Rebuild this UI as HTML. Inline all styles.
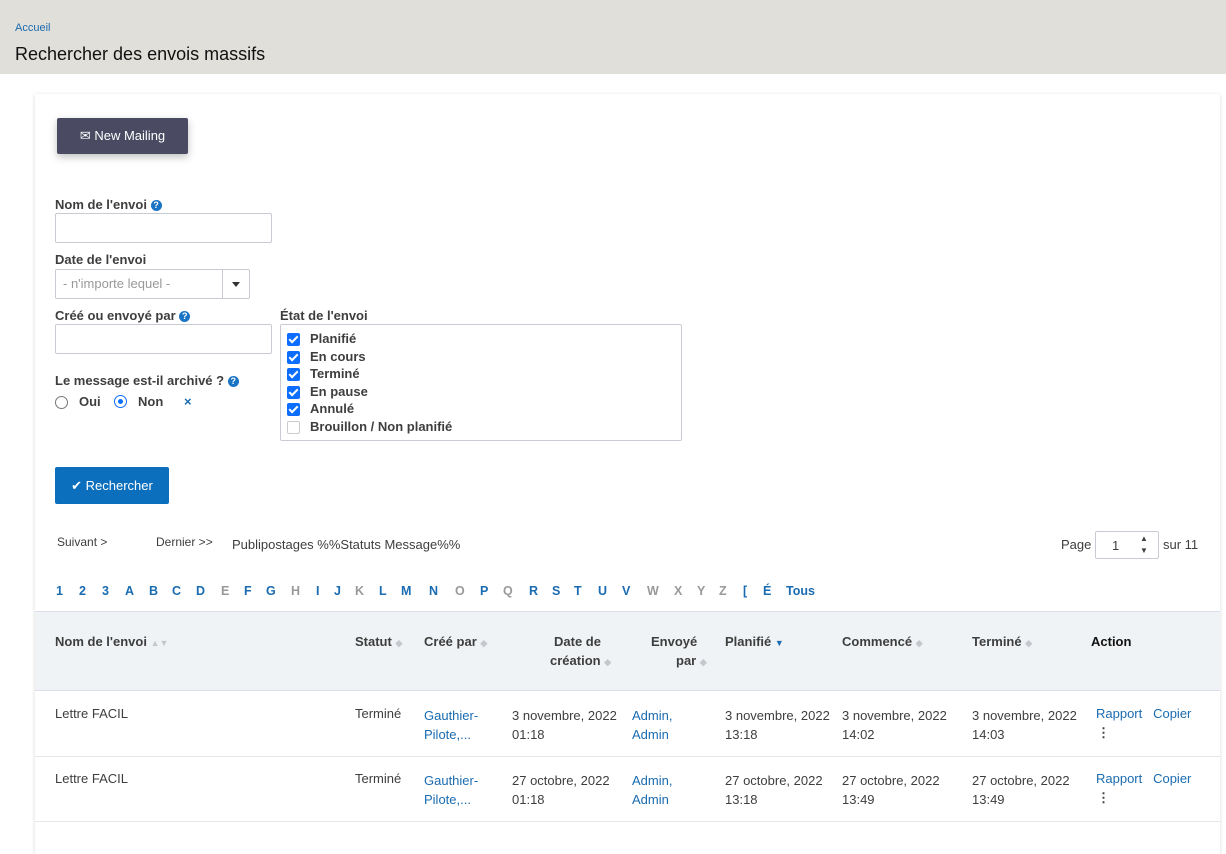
<!DOCTYPE html><html><head><meta charset="utf-8"><style>
body{margin:0;width:1226px;height:830px;overflow:hidden;background:#fff;font-family:"Liberation Sans",sans-serif;font-size:13px;color:#3e3e3e;position:relative}
.a{position:absolute;white-space:nowrap}
.hdr{position:absolute;left:0;top:0;width:1226px;height:74px;background:#e0dfd9}
.card{position:absolute;left:35px;top:94px;width:1185px;height:760px;background:#fff;box-shadow:0 1px 4px rgba(0,0,0,.15)}
.lbl{font-weight:bold;color:#3e3e3e}
.q{display:inline-block;width:11px;height:11px;border-radius:50%;background:#1a74c4;color:#fff;font-size:9px;text-align:center;line-height:11px;font-weight:bold;vertical-align:1px}
.inp{position:absolute;border:1px solid #c8ccd2;border-radius:2px;background:#fff;box-sizing:border-box}
.blue{color:#1a6bb0}
.cb{position:absolute;width:13px;height:13px;border-radius:2px;background:#0d6efd;left:287px}
.cb:after{content:"";position:absolute;left:4px;top:1px;width:3px;height:7px;border:solid #fff;border-width:0 2px 2px 0;transform:rotate(45deg)}
.th{font-weight:bold;color:#3e3e3e}
.s{color:#c4c8cc;font-size:9px}
.g{color:#999}
</style></head><body>
<div class="hdr"></div>
<div class="a blue" style="left:15px;top:22px;font-size:11px">Accueil</div>
<div class="a" style="left:15px;top:44px;font-size:18px;color:#111">Rechercher des envois massifs</div>
<div class="card"></div>
<div class="a" style="left:57px;top:118px;width:131px;height:36px;background:#4a4a63;border-radius:2px;box-shadow:0 3px 8px rgba(0,0,0,.25);color:#fff;line-height:36px;text-align:center">✉ New Mailing</div>
<div class="a lbl" style="left:55px;top:197px">Nom de l'envoi <span class="q">?</span></div>
<div class="inp" style="left:55px;top:213px;width:217px;height:30px"></div>
<div class="a lbl" style="left:55px;top:252px">Date de l'envoi</div>
<div class="inp" style="left:55px;top:269px;width:195px;height:30px"></div>
<div class="a" style="left:222px;top:270px;width:1px;height:28px;background:#c8ccd2"></div>
<div class="a" style="left:63px;top:276px;color:#999">- n'importe lequel -</div>
<div class="a" style="left:232px;top:282px;border:4px solid transparent;border-top:5px solid #333"></div>
<div class="a lbl" style="left:55px;top:308px">Créé ou envoyé par <span class="q">?</span></div>
<div class="inp" style="left:55px;top:324px;width:217px;height:30px"></div>
<div class="a lbl" style="left:55px;top:373px">Le message est-il archivé ? <span class="q">?</span></div>
<div class="a" style="left:55px;top:396px;width:11px;height:11px;border:1px solid #777;border-radius:50%"></div>
<div class="a" style="left:79px;top:394px;font-weight:bold">Oui</div>
<div class="a" style="left:114px;top:395px;width:11px;height:11px;border:1px solid #0d6efd;border-radius:50%"></div>
<div class="a" style="left:118px;top:399px;width:5px;height:5px;background:#0d6efd;border-radius:50%"></div>
<div class="a" style="left:138px;top:394px;font-weight:bold">Non</div>
<div class="a blue" style="left:184px;top:394px;font-weight:bold">×</div>
<div class="a lbl" style="left:280px;top:308px">État de l'envoi</div>
<div class="inp" style="left:280px;top:324px;width:402px;height:117px"></div>
<div class="cb" style="top:333px"></div><div class="a lbl" style="left:310px;top:331px">Planifié</div>
<div class="cb" style="top:351px"></div><div class="a lbl" style="left:310px;top:349px">En cours</div>
<div class="cb" style="top:368px"></div><div class="a lbl" style="left:310px;top:366px">Terminé</div>
<div class="cb" style="top:386px"></div><div class="a lbl" style="left:310px;top:384px">En pause</div>
<div class="cb" style="top:403px"></div><div class="a lbl" style="left:310px;top:401px">Annulé</div>
<div class="a" style="left:287px;top:421px;width:11px;height:11px;border:1px solid #ccc;border-radius:2px"></div><div class="a lbl" style="left:310px;top:419px">Brouillon / Non planifié</div>
<div class="a" style="left:55px;top:467px;width:114px;height:37px;background:#0c6fbe;border-radius:2px;color:#fff;line-height:37px;text-align:center">✔ Rechercher</div>
<div class="a" style="left:57px;top:535px;font-size:12px">Suivant &gt;</div>
<div class="a" style="left:156px;top:535px;font-size:12px">Dernier &gt;&gt;</div>
<div class="a" style="left:232px;top:537px">Publipostages %%Statuts Message%%</div>
<div class="a" style="left:1061px;top:537px">Page</div>
<div class="inp" style="left:1095px;top:531px;width:64px;height:28px"></div>
<div class="a" style="left:1112px;top:538px">1</div>
<div class="a" style="left:1140px;top:533px;font-size:8px;line-height:12px">▲<br>▼</div>
<div class="a" style="left:1163px;top:537px">sur 11</div>
<div class="a blue" style="top:584px;left:0;font-weight:bold;font-size:12.5px">
<span class="a" style="left:56px">1</span><span class="a" style="left:79px">2</span><span class="a" style="left:102px">3</span><span class="a" style="left:125px">A</span><span class="a" style="left:149px">B</span><span class="a" style="left:172px">C</span><span class="a" style="left:196px">D</span><span class="a g" style="left:221px">E</span><span class="a" style="left:244px">F</span><span class="a" style="left:266px">G</span><span class="a g" style="left:291px">H</span><span class="a" style="left:316px">I</span><span class="a" style="left:334px">J</span><span class="a g" style="left:355px">K</span><span class="a" style="left:379px">L</span><span class="a" style="left:401px">M</span><span class="a" style="left:429px">N</span><span class="a g" style="left:455px">O</span><span class="a" style="left:480px">P</span><span class="a g" style="left:503px">Q</span><span class="a" style="left:529px">R</span><span class="a" style="left:552px">S</span><span class="a" style="left:574px">T</span><span class="a" style="left:598px">U</span><span class="a" style="left:622px">V</span><span class="a g" style="left:647px">W</span><span class="a g" style="left:674px">X</span><span class="a g" style="left:697px">Y</span><span class="a g" style="left:719px">Z</span><span class="a" style="left:743px">[</span><span class="a" style="left:763px">É</span><span class="a" style="left:786px">Tous</span></div>
<div class="a" style="left:35px;top:611px;width:1185px;height:80px;background:#f0f3f5;border-top:1px solid #dde;border-bottom:1px solid #dde;box-sizing:border-box"></div>
<div class="a th" style="left:55px;top:634px">Nom de l'envoi <span class="s">&#9650;&#9660;</span></div>
<div class="a th" style="left:355px;top:634px">Statut <span class="s">◆</span></div>
<div class="a th" style="left:424px;top:634px">Créé par <span class="s">◆</span></div>
<div class="a th" style="left:554px;top:634px">Date de</div><div class="a th" style="left:550px;top:653px">création <span class="s">◆</span></div>
<div class="a th" style="left:651px;top:634px">Envoyé</div><div class="a th" style="left:676px;top:653px">par <span class="s">◆</span></div>
<div class="a th" style="left:725px;top:634px">Planifié <span style="color:#1a6bb0;font-size:9px">▼</span></div>
<div class="a th" style="left:842px;top:634px">Commencé <span class="s">◆</span></div>
<div class="a th" style="left:972px;top:634px">Terminé <span class="s">◆</span></div>
<div class="a th" style="left:1091px;top:634px;color:#111">Action</div>
<div class="a" style="left:35px;top:756px;width:1185px;height:1px;background:#e5e7ea"></div>
<div class="a" style="left:35px;top:821px;width:1185px;height:1px;background:#e5e7ea"></div>
<div class="a" style="left:55px;top:706px">Lettre FACIL</div>
<div class="a" style="left:355px;top:706px">Terminé</div>
<div class="a blue" style="left:424px;top:706px;line-height:19px">Gauthier-<br>Pilote,...</div>
<div class="a" style="left:512px;top:706px;line-height:19px">3 novembre, 2022<br>01:18</div>
<div class="a blue" style="left:632px;top:706px;line-height:19px">Admin,<br>Admin</div>
<div class="a" style="left:725px;top:706px;line-height:19px">3 novembre, 2022<br>13:18</div>
<div class="a" style="left:842px;top:706px;line-height:19px">3 novembre, 2022<br>14:02</div>
<div class="a" style="left:972px;top:706px;line-height:19px">3 novembre, 2022<br>14:03</div>
<div class="a blue" style="left:1096px;top:706px">Rapport&nbsp;&nbsp; Copier</div>
<div class="a" style="left:1097px;top:725px;font-weight:bold">⋮</div>
<div class="a" style="left:55px;top:771px">Lettre FACIL</div>
<div class="a" style="left:355px;top:771px">Terminé</div>
<div class="a blue" style="left:424px;top:771px;line-height:19px">Gauthier-<br>Pilote,...</div>
<div class="a" style="left:512px;top:771px;line-height:19px">27 octobre, 2022<br>01:18</div>
<div class="a blue" style="left:632px;top:771px;line-height:19px">Admin,<br>Admin</div>
<div class="a" style="left:725px;top:771px;line-height:19px">27 octobre, 2022<br>13:18</div>
<div class="a" style="left:842px;top:771px;line-height:19px">27 octobre, 2022<br>13:49</div>
<div class="a" style="left:972px;top:771px;line-height:19px">27 octobre, 2022<br>13:49</div>
<div class="a blue" style="left:1096px;top:771px">Rapport&nbsp;&nbsp; Copier</div>
<div class="a" style="left:1097px;top:790px;font-weight:bold">⋮</div>
</body></html>
